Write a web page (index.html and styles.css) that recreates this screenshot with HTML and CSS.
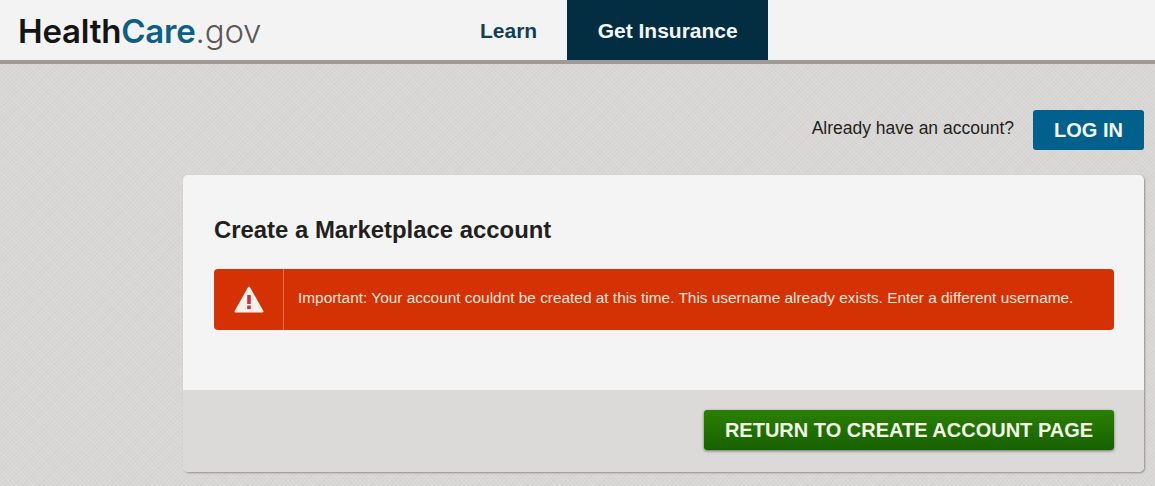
FILE: index.html
```html
<!DOCTYPE html>
<html lang='en'>
<head>
  <meta charset='UTF-8'>
  <meta name='viewport' content='width=device-width, initial-scale=1.0'>
  <title>Create a Marketplace account</title>
  <link rel="stylesheet" href="styles.css">
</head>
<body>

<header class='site-header'>
  <a class='logo' href='#'><span class='logo-health'>Health</span><span class='logo-care'>Care</span><span class='logo-gov'>.gov</span></a>
  <nav class='site-nav'>
    <a class='nav-link' href='#'>Learn</a>
    <a class='nav-link nav-active' href='#'>Get Insurance</a>
  </nav>
</header>

<main class='page'>
  <div class='login-row'>
    <span class='login-text'>Already have an account?</span>
    <a class='login-btn' href='#'>LOG IN</a>
  </div>

  <section class='card'>
    <div class='card-body'>
      <h1 class='card-title'>Create a Marketplace account</h1>
      <div class='alert'>
        <div class='alert-icon'>
          <svg width='30' height='27' viewBox='0 0 30 27'>
            <path d='M15 1.5 L28.5 25.5 H1.5 Z' fill='#f7f0ec' stroke='#f7f0ec' stroke-width='2' stroke-linejoin='round'/>
            <rect x='13.2' y='9' width='3.6' height='9' fill='#c8323a'/>
            <rect x='13.2' y='19.5' width='3.6' height='3.6' fill='#c8323a'/>
          </svg>
        </div>
        <div class='alert-text'>Important: Your account couldnt be created at this time. This username already exists. Enter a different username.</div>
      </div>
    </div>
    <div class='card-footer'>
      <a class='return-btn' href='#'>RETURN TO CREATE ACCOUNT PAGE</a>
    </div>
  </section>
</main>

</body>
</html>
```

FILE: styles.css
```css
* {
  margin: 0;
  padding: 0;
  box-sizing: border-box;
}

body {
  font-family: 'Liberation Sans', Arial, sans-serif;
  background-color: #d9d7d6;
  background-image: repeating-linear-gradient(45deg, rgba(255, 255, 255, 0.1) 0 1px, transparent 1px 3px), repeating-linear-gradient(-45deg, rgba(120, 115, 110, 0.05) 0 1px, transparent 1px 3px);
  height: 100vh;
  overflow: hidden;
  color: #231f20;
}

a {
  text-decoration: none;
}

/* Header */
.site-header {
  display: flex;
  height: 64px;
  background-color: #f4f3f3;
  border-bottom: 4px solid #a09a96;
}

.logo {
  width: 480px;
  padding: 9px 0 0 18px;
  font-family: 'Inter', sans-serif;
  font-size: 33px;
  line-height: 44px;
  letter-spacing: -0.2px;
  white-space: nowrap;
}

.logo-health {
  font-weight: 600;
  color: #141414;
}

.logo-care {
  font-weight: 600;
  color: #0e5f85;
}

.logo-gov {
  font-weight: 300;
  color: #5c5856;
}

.site-nav {
  display: flex;
}

.nav-link {
  font-size: 21px;
  font-weight: bold;
  line-height: 61px;
  color: #0f3f5c;
}

.nav-link:first-child {
  margin-right: 30px;
}

.nav-active {
  width: 201px;
  text-align: center;
  background-color: #032e41;
  color: #f4f6f7;
}

/* Page */
.page {
  display: flex;
  flex-direction: column;
  align-items: flex-end;
  padding: 46px 11px 0 0;
}

.login-row {
  display: flex;
  align-items: center;
  margin-bottom: 25px;
}

.login-text {
  font-size: 17.5px;
  margin-right: 19px;
  margin-top: -3px;
}

.login-btn {
  width: 111px;
  height: 40px;
  line-height: 40px;
  text-align: center;
  font-size: 20px;
  font-weight: bold;
  color: #f4f7f8;
  background-color: #02608c;
  border-radius: 3px;
}

/* Card */
.card {
  width: 961px;
  height: 297px;
  border-radius: 5px;
  overflow: hidden;
  background-color: #f5f4f4;
  box-shadow: 1px 1px 2px rgba(90, 85, 80, 0.55);
  display: flex;
  flex-direction: column;
}

.card-body {
  height: 215px;
  padding: 40px 30px 0 31px;
}

.card-title {
  font-size: 23.9px;
  line-height: 30px;
  font-weight: bold;
  margin-bottom: 24px;
}

.alert {
  display: flex;
  align-items: center;
  height: 61px;
  background-color: #d43205;
  border-radius: 4px;
  color: #f6e4dc;
}

.alert-icon {
  display: flex;
  align-items: center;
  justify-content: center;
  width: 70px;
  height: 100%;
  border-right: 1px solid #ea7149;
}

.alert-text {
  font-size: 15.4px;
  padding-left: 14px;
  margin-top: -4px;
  white-space: nowrap;
}

.card-footer {
  flex: 1;
  display: flex;
  justify-content: flex-end;
  padding: 20px 30px 0 0;
  background-color: #dcdad9;
}

.return-btn {
  width: 410px;
  height: 40px;
  line-height: 40px;
  text-align: center;
  font-size: 20px;
  font-weight: bold;
  color: #f3f8ea;
  background: linear-gradient(#2b8001, #176001);
  border-radius: 3px;
  box-shadow: 0 1px 3px rgba(0, 0, 0, 0.5);
}
```
